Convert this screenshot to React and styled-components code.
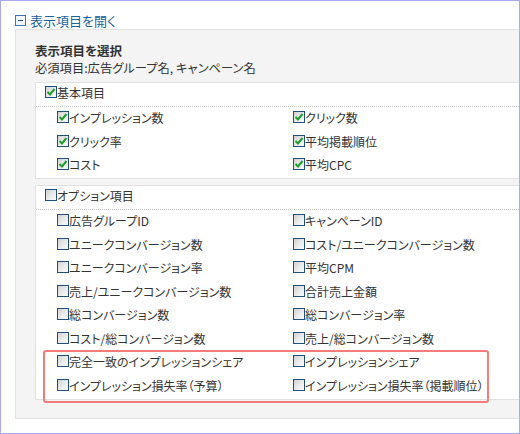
import styled, { createGlobalStyle } from 'styled-components';

const GlobalStyle = createGlobalStyle`
    body {
        margin: 0;
        background: #fff;
    }
`;

const Frame = styled.div`
    box-sizing: border-box;
    width: 520px;
    height: 434px;
    border: 1px solid #aaaaf2;
    overflow: hidden;
    font-family: "Noto Sans CJK JP", "Noto Sans", sans-serif;
    font-feature-settings: "palt" 1;
    font-size: 12px;
    color: #333;
`;

const Toggle = styled.div`
    display: flex;
    align-items: center;
    gap: 4px;
    height: 17px;
    margin: 11px 0 0 14px;
    color: #1a5f9e;
    font-size: 13px;
    cursor: pointer;
`;

const ToggleIcon = styled.span`
    box-sizing: border-box;
    position: relative;
    width: 11px;
    height: 11px;
    border: 1px solid #3f74b4;
    background: #f2f6fb;

    &::after {
        content: '';
        position: absolute;
        left: 2px;
        right: 2px;
        top: 4px;
        height: 1px;
        background: #1f4f86;
    }
`;

const Panel = styled.div`
    margin: 0 -20px 0 14px;
    padding: 12px 0 18px 19px;
    background: #f4f4f4;
    border: 1px solid #e2e2e2;
`;

const Title = styled.div`
    font-weight: bold;
    font-size: 12.5px;
    line-height: 18px;
`;

const Note = styled.div`
    font-size: 12.3px;
    line-height: 17px;
`;

const Group = styled.div`
    position: relative;
    margin-top: ${(p) => p.$gap}px;
    background: #fff;
    border: 1px solid #e2e2e2;
`;

const GroupHead = styled.label`
    box-sizing: border-box;
    display: flex;
    align-items: flex-start;
    height: 24px;
    padding: 3px 0 0 9px;
    border-bottom: 1px dotted #c8c8c8;
    line-height: 14px;
`;

const List = styled.div`
    display: grid;
    grid-template-columns: 236px 1fr;
    grid-auto-rows: 13px;
    row-gap: 10.5px;
    padding: 4px 0 7px 21px;
`;

const Item = styled.label`
    display: flex;
    align-items: flex-start;
    line-height: 14px;
    white-space: nowrap;
`;

const Box = styled.span`
    box-sizing: border-box;
    flex: none;
    display: flex;
    align-items: center;
    justify-content: center;
    width: 12px;
    height: 12px;
    border: 1px solid #1e4f7e;
    background: linear-gradient(135deg, #d2d2d2 0%, #ececec 55%, #fbfbfb 100%);
`;

const Highlight = styled.div`
    position: absolute;
    left: 7px;
    top: 164px;
    width: 446px;
    height: 53px;
    box-sizing: border-box;
    border: 2px solid #f57b7b;
    border-radius: 3px;
    pointer-events: none;
`;

const Check = () => (
    <svg width="10" height="10" viewBox="0 0 10 10">
        <path d="M1.5 5 L4 7.5 L8.5 2" fill="none" stroke="#1f9f2a" strokeWidth="2" />
    </svg>
);

const CheckBox = ({ checked }) => <Box>{checked && <Check />}</Box>;

const basic = ['インプレッション数', 'クリック数', 'クリック率', '平均掲載順位', 'コスト', '平均CPC'];

const options = [
    '広告グループID',
    'キャンペーンID',
    'ユニークコンバージョン数',
    'コスト/ユニークコンバージョン数',
    'ユニークコンバージョン率',
    '平均CPM',
    '売上/ユニークコンバージョン数',
    '合計売上金額',
    '総コンバージョン数',
    '総コンバージョン率',
    'コスト/総コンバージョン数',
    '売上/総コンバージョン数',
    '完全一致のインプレッションシェア',
    'インプレッションシェア',
    'インプレッション損失率（予算）',
    'インプレッション損失率（掲載順位）',
];

const App = () => {
    return (
        <>
            <GlobalStyle />
            <Frame>
                <Toggle>
                    <ToggleIcon />
                    表示項目を開く
                </Toggle>
                <Panel>
                    <Title>表示項目を選択</Title>
                    <Note>必須項目:広告グループ名, キャンペーン名</Note>
                    <Group $gap={5}>
                        <GroupHead>
                            <CheckBox checked />
                            基本項目
                        </GroupHead>
                        <List>
                            {basic.map((name) => (
                                <Item key={name}>
                                    <CheckBox checked />
                                    {name}
                                </Item>
                            ))}
                        </List>
                    </Group>
                    <Group $gap={6}>
                        <GroupHead>
                            <CheckBox />
                            オプション項目
                        </GroupHead>
                        <List>
                            {options.map((name) => (
                                <Item key={name}>
                                    <CheckBox />
                                    {name}
                                </Item>
                            ))}
                        </List>
                        <Highlight />
                    </Group>
                </Panel>
            </Frame>
        </>
    );
};

export default App;
